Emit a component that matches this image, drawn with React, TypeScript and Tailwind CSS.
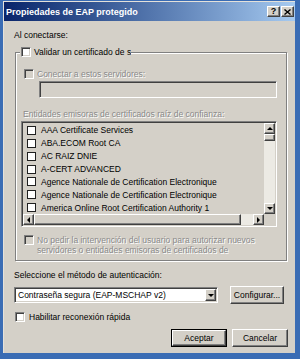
import React from 'react';

const raised =
  'border border-t-white border-l-white border-r-[#404040] border-b-[#404040] shadow-[inset_-1px_-1px_0_#808080]';
const sunken =
  'border border-t-[#808080] border-l-[#808080] border-r-white border-b-white shadow-[inset_1px_1px_0_#404040,inset_-1px_-1px_0_#d4d0c8]';
const grayText = 'text-[#8a8a8a] [text-shadow:1px_1px_0_#ffffff]';

const certs = [
  'AAA Certificate Services',
  'ABA.ECOM Root CA',
  'AC RAIZ DNIE',
  'A-CERT ADVANCED',
  'Agence Nationale de Certification Electronique',
  'Agence Nationale de Certification Electronique',
  'America Online Root Certification Authority 1',
];

const Check: React.FC<{ disabled?: boolean }> = ({ disabled }) => (
  <span
    className={`block shrink-0 w-[10px] h-[10px] ${sunken} ${disabled ? 'bg-[#d4d0c8]' : 'bg-white'}`}
  />
);

const Arrow: React.FC<{ dir: 'up' | 'down' | 'left' | 'right' }> = ({ dir }) => {
  const pts = {
    up: '1,4 4,1 7,4',
    down: '1,1 4,4 7,1',
    left: '4,1 1,4 4,7',
    right: '1,1 4,4 1,7',
  }[dir];
  const vertical = dir === 'up' || dir === 'down';
  return (
    <svg width={vertical ? 8 : 5} height={vertical ? 5 : 8} viewBox={vertical ? '0 0 8 5' : '0 0 5 8'}>
      <polygon points={pts} fill="#000" />
    </svg>
  );
};

const ScrollBtn: React.FC<{ dir: 'up' | 'down' | 'left' | 'right' }> = ({ dir }) => (
  <div className={`w-[11px] h-[11px] shrink-0 bg-[#d4d0c8] flex items-center justify-center ${raised}`}>
    <Arrow dir={dir} />
  </div>
);

const Button: React.FC<{ label: string; width: string; isDefault?: boolean }> = ({ label, width, isDefault }) => (
  <div className={`${width} h-[18px] ${isDefault ? 'border border-black' : ''} flex`}>
    <div className={`flex-1 bg-[#d4d0c8] flex items-center justify-center text-black ${raised}`}>{label}</div>
  </div>
);

export default function App() {
  return (
    <div className="w-[300px] h-[359px] bg-[#3a6cb4] pl-[3px] pr-[5px] pt-[1px] pb-[6px] flex font-['Liberation_Sans',Arial,sans-serif] text-[8.5px] leading-[12px] text-black">
      <div className="flex-1 flex flex-col bg-[#d4d0c8] border-l border-t border-[#e4e1da]">
        {/* title bar */}
        <div className="h-[19px] shrink-0 bg-linear-to-r from-[#0a246a] to-[#a6caf0] flex items-center pl-[2px] pr-[1px]">
          <span className="text-white font-bold text-[9px] flex-1">Propiedades de EAP protegido</span>
          <div className={`w-[13px] h-[11px] bg-[#d4d0c8] flex items-center justify-center font-bold text-[9px] leading-none ${raised}`}>?</div>
          <div className={`w-[13px] h-[11px] ml-[1px] bg-[#d4d0c8] flex items-center justify-center ${raised}`}>
            <svg width="7" height="6" viewBox="0 0 7 6">
              <path d="M0.5 0.5 L6.5 5.5 M6.5 0.5 L0.5 5.5" stroke="#000" strokeWidth="1.4" />
            </svg>
          </div>
        </div>

        {/* body */}
        <div className="flex-1 flex flex-col pl-[10px] pr-[7px] pt-[8px]">
          <div>Al conectarse:</div>

          <fieldset className="mt-[5px] ml-[1px] mr-[1px] border border-[#808080] shadow-[inset_1px_1px_0_#fff,1px_1px_0_#fff] pl-[4px] pb-[5px]">
            <legend className="w-[111px] overflow-hidden whitespace-nowrap bg-[#d4d0c8]">
              <span className="flex items-center gap-[3px] pl-[1px]">
                <Check />
                <span>Validar un certificado de servidor</span>
              </span>
            </legend>

            <div className="flex items-center gap-[3px] mt-[10px] ml-[4px]">
              <Check disabled />
              <span className={grayText}>Conectar a estos servidores:</span>
            </div>
            <div className={`ml-[19px] mt-[1px] w-[238px] h-[17px] bg-[#d4d0c8] ${sunken}`} />

            <div className={`mt-[10px] ml-[3px] ${grayText}`}>
              Entidades emisoras de certificados raíz de confianza:
            </div>

            <div className={`ml-[1px] mt-[1px] w-[256px] h-[106px] bg-[#d4d0c8] p-[1px] flex flex-col ${sunken}`}>
              <div className="flex flex-1 min-h-0">
                <div className="flex-1 flex flex-col pt-[1px] overflow-hidden">
                  {certs.map((c, i) => (
                    <div key={i} className="h-[13px] flex items-center gap-[5px] pl-[4px] whitespace-nowrap">
                      <span className="block shrink-0 w-[9px] h-[9px] border border-[#202020] bg-white" />
                      <span>{c}</span>
                    </div>
                  ))}
                </div>
                <div className="w-[11px] flex flex-col bg-[#eceae4]">
                  <ScrollBtn dir="up" />
                  <div className={`h-[7px] bg-[#d4d0c8] ${raised}`} />
                  <div className="flex-1" />
                  <ScrollBtn dir="down" />
                </div>
              </div>
              <div className="h-[11px] flex shrink-0">
                <ScrollBtn dir="left" />
                <div className={`w-[207px] bg-[#d4d0c8] ${raised}`} />
                <div className="flex-1 bg-[#eceae4]" />
                <ScrollBtn dir="right" />
                <div className="w-[11px] bg-[#d4d0c8]" />
              </div>
            </div>

            <div className="flex items-start gap-[3px] mt-[8px] ml-[4px] leading-[10px]">
              <Check disabled />
              <span className={grayText}>
                No pedir la intervención del usuario para autorizar nuevos
                <br />
                servidores o entidades emisoras de certificados de
              </span>
            </div>
          </fieldset>

          <div className="mt-[8px]">Seleccione el método de autenticación:</div>

          <div className="flex items-center mt-[5px]">
            <div className={`w-[204px] h-[16px] bg-white flex items-center pl-[2px] pr-[1px] ${sunken}`}>
              <span className="flex-1 pl-[1px]">Contraseña segura (EAP-MSCHAP v2)</span>
              <div className={`w-[11px] h-[12px] bg-[#d4d0c8] flex items-center justify-center ${raised}`}>
                <Arrow dir="down" />
              </div>
            </div>
            <div className="ml-[12px]">
              <Button label="Configurar..." width="w-[54px]" />
            </div>
          </div>

          <div className="flex items-center gap-[4px] mt-[7px] ml-[1px]">
            <Check />
            <span>Habilitar reconexión rápida</span>
          </div>

          <div className="flex justify-end gap-[5px] mt-[6px]">
            <Button label="Aceptar" width="w-[56px]" isDefault />
            <Button label="Cancelar" width="w-[56px]" />
          </div>
        </div>
      </div>
    </div>
  );
}
